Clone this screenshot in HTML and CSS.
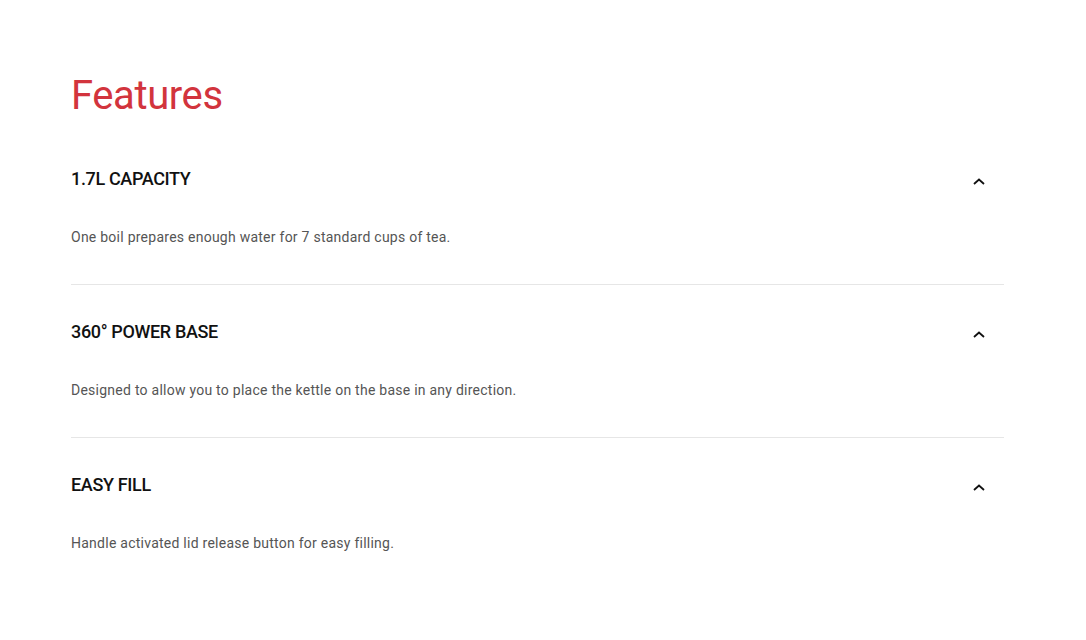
FILE: index.html
```html
<!DOCTYPE html>
<html lang="en">
<head>
<meta charset="utf-8">
<title>Features</title>
<link rel="stylesheet" href="styles.css">
</head>
<body>
<main class="features">
  <h2 class="features-title">Features</h2>
  <ul class="accordion">
    <li class="item">
      <div class="item-head">
        <h3 class="item-title">1.7L CAPACITY</h3>
        <span class="chevron"><svg width="12" height="7" viewBox="0 0 12 7"><path d="M1 6 L6 1.5 L11 6" fill="none" stroke="#111" stroke-width="1.8"/></svg></span>
      </div>
      <p class="item-body">One boil prepares enough water for 7 standard cups of tea.</p>
    </li>
    <li class="item">
      <div class="item-head">
        <h3 class="item-title">360° POWER BASE</h3>
        <span class="chevron"><svg width="12" height="7" viewBox="0 0 12 7"><path d="M1 6 L6 1.5 L11 6" fill="none" stroke="#111" stroke-width="1.8"/></svg></span>
      </div>
      <p class="item-body">Designed to allow you to place the kettle on the base in any direction.</p>
    </li>
    <li class="item last">
      <div class="item-head">
        <h3 class="item-title">EASY FILL</h3>
        <span class="chevron"><svg width="12" height="7" viewBox="0 0 12 7"><path d="M1 6 L6 1.5 L11 6" fill="none" stroke="#111" stroke-width="1.8"/></svg></span>
      </div>
      <p class="item-body">Handle activated lid release button for easy filling.</p>
    </li>
  </ul>
</main>
</body>
</html>
```
FILE: styles.css
```css
* { box-sizing: border-box; }
html, body { margin: 0; padding: 0; background: #fff; }
body { font-family: Roboto, "Liberation Sans", sans-serif; }

.features {
  padding: 72px 82px 0 71px;
}

.features-title {
  margin: 0;
  font-size: 40px;
  line-height: 48px;
  font-weight: 400;
  letter-spacing: -0.4px;
  color: #d2343d;
}

.accordion {
  list-style: none;
  margin: 12px 0 0;
  padding: 0;
}

.item {
  padding: 32px 0 37px;
  border-bottom: 1px solid #e6e6e6;
}
.item.last { border-bottom: none; }

.item-head {
  display: flex;
  align-items: center;
  justify-content: space-between;
  height: 30px;
}

.item-title {
  margin: 0;
  font-size: 18px;
  line-height: 30px;
  font-weight: 500;
  letter-spacing: -0.35px;
  color: #111;
}

.chevron {
  display: flex;
  align-items: center;
  justify-content: center;
  width: 24px;
  height: 24px;
  margin-right: 13px;
  margin-top: 4px;
}

.item-body {
  margin: 33px 0 0;
  font-size: 14px;
  line-height: 20px;
  letter-spacing: 0.25px;
  color: #555;
}
```
